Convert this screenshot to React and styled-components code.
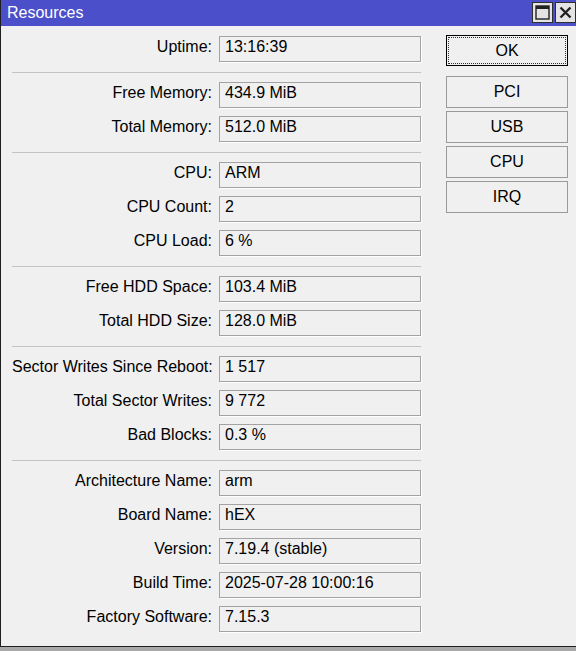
import React from "react";
import styled, { createGlobalStyle } from "styled-components";

const GlobalStyle = createGlobalStyle`
  html, body {
    margin: 0;
    padding: 0;
    background: #a9a9a9;
  }
  body {
    font-family: "Liberation Sans", Arial, sans-serif;
    font-size: 16px;
  }
`;

const sections = [
  [["Uptime", "13:16:39"]],
  [
    ["Free Memory", "434.9 MiB"],
    ["Total Memory", "512.0 MiB"],
  ],
  [
    ["CPU", "ARM"],
    ["CPU Count", "2"],
    ["CPU Load", "6 %"],
  ],
  [
    ["Free HDD Space", "103.4 MiB"],
    ["Total HDD Size", "128.0 MiB"],
  ],
  [
    ["Sector Writes Since Reboot", "1 517"],
    ["Total Sector Writes", "9 772"],
    ["Bad Blocks", "0.3 %"],
  ],
  [
    ["Architecture Name", "arm"],
    ["Board Name", "hEX"],
    ["Version", "7.19.4 (stable)"],
    ["Build Time", "2025-07-28 10:00:16"],
    ["Factory Software", "7.15.3"],
  ],
];

const buttons = ["PCI", "USB", "CPU", "IRQ"];

const App = () => {
  return (
    <>
      <GlobalStyle />
      <Window>
        <TitleBar>
          <Title>Resources</Title>
          <TitleButtons>
            <TitleButton aria-label="maximize">
              <svg width="15" height="15" viewBox="0 0 15 15">
                <rect x="1" y="1" width="13" height="13" fill="none" stroke="#222" strokeWidth="1.4" />
                <rect x="1" y="1" width="13" height="3" fill="#222" />
              </svg>
            </TitleButton>
            <TitleButton aria-label="close">
              <svg width="15" height="15" viewBox="0 0 15 15">
                <path d="M2.5 2.5 L12.5 12.5 M12.5 2.5 L2.5 12.5" stroke="#222" strokeWidth="2.4" />
              </svg>
            </TitleButton>
          </TitleButtons>
        </TitleBar>
        <Body>
          <Form>
            {sections.map((rows, i) => (
              <Section key={i} $first={i === 0}>
                {rows.map(([label, value]) => (
                  <Row key={label}>
                    <Label>{label}:</Label>
                    <Field>{value}</Field>
                  </Row>
                ))}
              </Section>
            ))}
          </Form>
          <Actions>
            <Button $primary>OK</Button>
            <ButtonStack>
              {buttons.map((b) => (
                <Button key={b}>{b}</Button>
              ))}
            </ButtonStack>
          </Actions>
        </Body>
      </Window>
    </>
  );
};

export default App;

const Window = styled.div`
  display: flex;
  flex-direction: column;
  width: 575px;
  height: 646px;
  background: #f0f0f0;
  border-left: 1px solid #1e1e1e;
  border-bottom: 1px solid #1e1e1e;
`;

const TitleBar = styled.div`
  display: flex;
  align-items: center;
  justify-content: space-between;
  height: 26px;
  background: #4b4fca;
  padding-left: 6px;
`;

const Title = styled.div`
  color: #ffffff;
  font-size: 16px;
  line-height: 26px;
`;

const TitleButtons = styled.div`
  display: flex;
  gap: 2px;
  align-self: flex-start;
  margin-top: 2px;
`;

const TitleButton = styled.div`
  display: flex;
  align-items: center;
  justify-content: center;
  width: 19px;
  height: 19px;
  background: #e4e4e4;
  border: 1px solid #2e2e2e;
`;

const Body = styled.div`
  display: flex;
  padding: 10px 0 0 11px;
`;

const Form = styled.div`
  display: flex;
  flex-direction: column;
  width: 409px;
`;

const Section = styled.div`
  display: flex;
  flex-direction: column;
  gap: 8px;
  ${({ $first }) =>
    $first
      ? ""
      : `
    margin-top: 10px;
    padding-top: 9px;
    border-top: 1px solid #c3c3c3;
  `}
`;

const Row = styled.div`
  display: grid;
  grid-template-columns: 200px 202px;
  column-gap: 7px;
  height: 26px;
`;

const Label = styled.div`
  text-align: right;
  white-space: nowrap;
  color: #000;
  font-size: 16px;
  line-height: 20px;
  padding-top: 1px;
`;

const Field = styled.div`
  height: 26px;
  box-sizing: border-box;
  border: 1px solid #a3a3a3;
  box-shadow: 1px 1px 0 #ffffff;
  padding: 0 5px;
  color: #000;
  font-size: 16px;
  line-height: 20px;
  white-space: nowrap;
`;

const Actions = styled.div`
  display: flex;
  flex-direction: column;
  gap: 10px;
  width: 122px;
  margin-left: 25px;
  margin-top: -1px;
`;

const ButtonStack = styled.div`
  display: flex;
  flex-direction: column;
  gap: 3px;
`;

const Button = styled.div`
  position: relative;
  display: flex;
  align-items: center;
  justify-content: center;
  height: ${({ $primary }) => ($primary ? "31px" : "32px")};
  box-sizing: border-box;
  border: 1px solid ${({ $primary }) => ($primary ? "#000" : "#9a9a9a")};
  background: #f0f0f0;
  color: #000;
  font-size: 16px;
  &::after {
    content: "";
    display: ${({ $primary }) => ($primary ? "block" : "none")};
    position: absolute;
    inset: 1px;
    border: 1px dotted #333;
  }
`;
